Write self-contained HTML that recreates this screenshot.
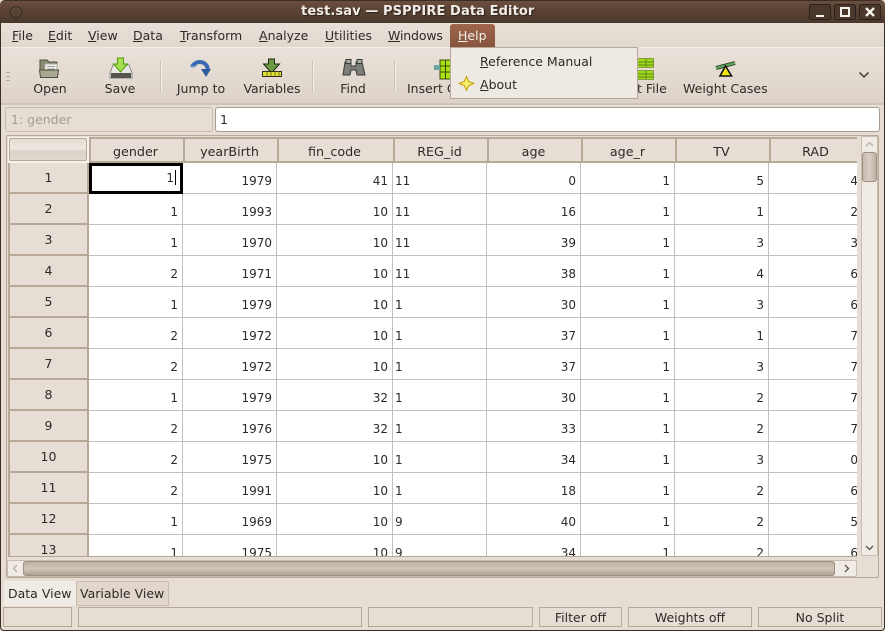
<!DOCTYPE html>
<html><head><meta charset="utf-8">
<style>
html,body{margin:0;padding:0;background:#e6ddd4}
#w{position:relative;width:885px;height:631px;overflow:hidden;background:#e6ddd4;font:12.5px "DejaVu Sans",sans-serif;color:#2e2a26}
.a{position:absolute;white-space:nowrap}
.m{top:28px;line-height:16px}
.t{top:81px;line-height:15px;text-align:center}
.sep{position:absolute;top:60px;width:2px;height:32px;background:linear-gradient(90deg,#cfc4b8 50%,#f2ece6 50%)}
u{text-decoration:underline;text-underline-offset:1px}
table{border-collapse:separate;border-spacing:0;table-layout:fixed;position:absolute;left:0;top:0;width:855px;font:12px "DejaVu Sans",sans-serif;color:#2e2a26}
th{height:26px;padding:4px 3px 0 0;background:#e6ddd4;font:normal 12.7px/18px "DejaVu Sans",sans-serif;border:solid #b8a898;border-width:2px 0 2px 2px;box-sizing:border-box;text-align:center;vertical-align:top}
td{height:31px;padding:6px 4px 0 0;box-sizing:border-box;border-right:1px solid #c0c0c0;border-bottom:1px solid #c0c0c0;text-align:right;background:#fff;line-height:24px;overflow:hidden;vertical-align:top}
td.h{background:#e6ddd4;text-align:center;padding:0;border-left:2px solid #b8a898;border-right:2px solid #b8a898;border-bottom:2px solid #b8a898;line-height:29px;font-size:12.5px}
td.l{text-align:left;padding-left:2px}
.st{position:absolute;top:607px;height:20px;box-sizing:border-box;border:1px solid #b8a898;text-align:center;line-height:20px}
</style></head><body><div id="w">
<!-- title bar -->
<div class="a" style="left:0;top:0;width:885px;height:23px;background:linear-gradient(#6c4f3e 0,#5d4536 35%,#4a382c 100%);border-top:1px solid #3a2d24;box-sizing:border-box;border-radius:5px 5px 0 0"></div>
<div class="a" style="left:10px;top:6px;width:10px;height:10px;border:1px solid #2f241c;border-radius:50%;box-shadow:inset 0 0 0 1px #6f5a4b"></div>
<div class="a" style="left:301px;top:4px;font:bold 13px/16px 'DejaVu Sans',sans-serif;color:#f2ece6;text-shadow:1px 1px 1px #2a1f18;letter-spacing:.1px">test.sav — PSPPIRE Data Editor</div>
<svg class="a" style="left:808px;top:3px" width="74" height="18">
<g fill="#4a382c" stroke="#2b211a"><rect x="1.500" y="1.500" width="21" height="15" rx="2"/><rect x="26.500" y="1.500" width="21" height="15" rx="2"/><rect x="51.500" y="1.500" width="21" height="15" rx="2"/></g>
<g stroke="#f4f0ea" fill="none" stroke-width="2"><path d="M8 13h8"/><rect x="33" y="5" width="8" height="8"/><path d="M58 5l8 8M66 5l-8 8" stroke-width="2.400"/></g></svg>
<!-- menu bar -->
<div class="a" style="left:0;top:23px;width:885px;height:25px;background:linear-gradient(#e8e0d8,#e0d7cd);border-bottom:1px solid #f2ece6;box-sizing:border-box"></div>
<div class="a m" style="left:12px"><u>F</u>ile</div>
<div class="a m" style="left:48px"><u>E</u>dit</div>
<div class="a m" style="left:88px"><u>V</u>iew</div>
<div class="a m" style="left:133px"><u>D</u>ata</div>
<div class="a m" style="left:180px"><u>T</u>ransform</div>
<div class="a m" style="left:259px"><u>A</u>nalyze</div>
<div class="a m" style="left:325px"><u>U</u>tilities</div>
<div class="a m" style="left:388px;letter-spacing:-.15px"><u>W</u>indows</div>
<div class="a" style="left:450px;top:24px;width:45px;height:23px;background:linear-gradient(#a0654b,#875540);border-radius:3px 3px 0 0"></div>
<div class="a m" style="left:458px;color:#f4f0ea"><u>H</u>elp</div>
<!-- toolbar -->
<div class="a" style="left:0;top:48px;width:885px;height:57px;background:linear-gradient(#e9e1d9,#ddd3c9);border-bottom:2px solid #cfc4b8;box-sizing:border-box"></div>
<svg class="a" style="left:6px;top:72px" width="5" height="10"><path d="M0 .5h4M0 4.500h4M0 8.500h4" stroke="#b8a898"/></svg>
<div class="sep" style="left:160px"></div><div class="sep" style="left:312px"></div><div class="sep" style="left:394px"></div>
<!-- open -->
<svg class="a" style="left:38px;top:57px" width="24" height="22"><path d="M2 3h7l2 2h8v8H2z" fill="#8a8a72" stroke="#4e4e40"/><rect x="7" y="7" width="12" height="9" fill="#f4f4f0" stroke="#aaa"/><path d="M9 9.500h8M9 12h8" stroke="#999"/><path d="M1.500 13h19l-1 7.500h-17z" fill="#a8a890" stroke="#4e4e40"/></svg>
<div class="a t" style="left:20px;width:60px">Open</div>
<!-- save -->
<svg class="a" style="left:109px;top:56px" width="24" height="24"><path d="M4 9h16l3 8v5H1v-5z" fill="#e8e8e4" stroke="#8a8a84"/><rect x="2" y="17" width="20" height="5" fill="#55554e"/><path d="M8.500 2h6v6h4l-7 8-7-8h4z" fill="#a5e050" stroke="#4e9a06"/></svg>
<div class="a t" style="left:90px;width:60px">Save</div>
<!-- jump -->
<svg class="a" style="left:190px;top:60px" width="22" height="18"><path d="M2 7C5 0 16 0 18 9" fill="none" stroke="#3a6ab0" stroke-width="4"/><path d="M11 9h10l-5 8z" fill="#2e5c9e"/><path d="M1 7l6-1" stroke="#7ea6dc" stroke-width="1"/></svg>
<div class="a t" style="left:171px;width:60px">Jump to</div>
<!-- variables -->
<svg class="a" style="left:261px;top:58px" width="22" height="20"><path d="M7.500 1h6v5h5l-8 9-8-9h5z" fill="#6c9a44" stroke="#1c2a10"/><rect x="1.500" y="13.500" width="19" height="5" fill="#e2e23c" stroke="#33331a"/><path d="M6 14v4M10 14v4M14 14v4M18 14v4" stroke="#777720"/></svg>
<div class="a t" style="left:236px;width:72px">Variables</div>
<!-- find -->
<svg class="a" style="left:342px;top:58px" width="24" height="20"><path d="M3 4h6v4h5V4h6l3 13h-8l-1-5h-5l-1 5H1z" fill="#7c7e7a" stroke="#3a3a38"/><rect x="4" y="1.500" width="5" height="4" fill="#a8aaa6" stroke="#3a3a38"/><rect x="15" y="1.500" width="5" height="4" fill="#a8aaa6" stroke="#3a3a38"/></svg>
<div class="a t" style="left:323px;width:60px">Find</div>
<!-- insert case -->
<svg class="a" style="left:434px;top:59px" width="18" height="21"><rect x="6" y="1" width="11" height="19" fill="#a8e010" stroke="#3a4a0a"/><path d="M6 7h11M6 13h11M11.500 1v19" stroke="#3a4a0a"/><path d="M0 6h6v5H0z" fill="#6aa5a0"/></svg>
<div class="a t" style="left:407px">Insert C</div>
<!-- split icon -->
<svg class="a" style="left:637px;top:58px" width="18" height="24"><rect x=".5" y=".5" width="16" height="9" fill="#a0d820" stroke="#8aa040"/><rect x=".5" y="12.500" width="16" height="9" fill="#a0d820" stroke="#8aa040"/><path d="M0 4h17M0 7h17M0 16h17M0 19h17M9 0v9M9 12v9" stroke="#5f8a10"/></svg>
<div class="a t" style="left:637px">t File</div>
<!-- weight -->
<svg class="a" style="left:715px;top:60px" width="22" height="18"><path d="M1 8L20 3" stroke="#2a3a20" stroke-width="4"/><path d="M1 8L20 3" stroke="#5faa60" stroke-width="2"/><path d="M10.500 6l6 10H5z" fill="#f2e610" stroke="#111" stroke-width="1.600"/></svg>
<div class="a t" style="left:683px">Weight Cases</div>
<svg class="a" style="left:858px;top:71px" width="12" height="9"><path d="M1.500 1.500L6 6l4.500-4.500" fill="none" stroke="#3f3a34" stroke-width="1.500"/></svg>
<!-- ref entry -->
<div class="a" style="left:5px;top:107px;width:208px;height:25px;box-sizing:border-box;border:1px solid #c8bcb0;border-radius:3px;background:#e6ddd4;color:#a89c90;padding-left:5px;line-height:23px">1: gender</div>
<div class="a" style="left:215px;top:107px;width:665px;height:25px;box-sizing:border-box;border:1px solid #a89c90;border-radius:3px;background:#fff;padding-left:4px;line-height:23px">1</div>
<!-- frame -->
<div class="a" style="left:6px;top:135px;width:873px;height:443px;box-sizing:border-box;border:1px solid #b8a898;border-radius:2px"></div>
<!-- sheet -->
<div class="a" style="left:8px;top:137px;width:849px;height:420px;overflow:hidden;background:#fff;border-bottom:1px solid #b8a898;box-sizing:border-box">
<table>
<colgroup><col style="width:81px"><col style="width:94px"><col style="width:94px"><col style="width:116px"><col style="width:94px"><col style="width:94px"><col style="width:94px"><col style="width:94px"><col style="width:94px"></colgroup>
<tr><th style="background:#f6f2ee;border:0;padding:0;position:relative"><div style="position:absolute;left:1px;top:1px;width:78px;height:23px;box-sizing:border-box;border:1px solid #b8a898;border-radius:2px;background:linear-gradient(#e4dbd2,#eee8e2 45%,#dcd2c8 60%,#e2d9d0)"></div></th><th>gender</th><th>yearBirth</th><th>fin_code</th><th>REG_id</th><th>age</th><th>age_r</th><th>TV</th><th>RAD</th></tr>
<tr><td class="h">1</td><td style="padding:0 4px 0 0;border:3px solid #000;line-height:24px">1<span style="display:inline-block;width:1px;height:15px;background:#000;margin-left:1px;vertical-align:-3px"></span></td><td>1979</td><td>41</td><td class="l">11</td><td>0</td><td>1</td><td>5</td><td>4</td></tr>
<tr><td class="h">2</td><td>1</td><td>1993</td><td>10</td><td class="l">11</td><td>16</td><td>1</td><td>1</td><td>2</td></tr>
<tr><td class="h">3</td><td>1</td><td>1970</td><td>10</td><td class="l">11</td><td>39</td><td>1</td><td>3</td><td>3</td></tr>
<tr><td class="h">4</td><td>2</td><td>1971</td><td>10</td><td class="l">11</td><td>38</td><td>1</td><td>4</td><td>6</td></tr>
<tr><td class="h">5</td><td>1</td><td>1979</td><td>10</td><td class="l">1</td><td>30</td><td>1</td><td>3</td><td>6</td></tr>
<tr><td class="h">6</td><td>2</td><td>1972</td><td>10</td><td class="l">1</td><td>37</td><td>1</td><td>1</td><td>7</td></tr>
<tr><td class="h">7</td><td>2</td><td>1972</td><td>10</td><td class="l">1</td><td>37</td><td>1</td><td>3</td><td>7</td></tr>
<tr><td class="h">8</td><td>1</td><td>1979</td><td>32</td><td class="l">1</td><td>30</td><td>1</td><td>2</td><td>7</td></tr>
<tr><td class="h">9</td><td>2</td><td>1976</td><td>32</td><td class="l">1</td><td>33</td><td>1</td><td>2</td><td>7</td></tr>
<tr><td class="h">10</td><td>2</td><td>1975</td><td>10</td><td class="l">1</td><td>34</td><td>1</td><td>3</td><td>0</td></tr>
<tr><td class="h">11</td><td>2</td><td>1991</td><td>10</td><td class="l">1</td><td>18</td><td>1</td><td>2</td><td>6</td></tr>
<tr><td class="h">12</td><td>1</td><td>1969</td><td>10</td><td class="l">9</td><td>40</td><td>1</td><td>2</td><td>5</td></tr>
<tr><td class="h">13</td><td>1</td><td>1975</td><td>10</td><td class="l">9</td><td>34</td><td>1</td><td>2</td><td>6</td></tr>
</table>
</div>
<!-- v scrollbar -->
<div class="a" style="left:861px;top:136px;width:17px;height:420px;box-sizing:border-box;border:1px solid #c8bcb0;background:#f0ebe5;border-radius:2px"></div>
<svg class="a" style="left:864px;top:140px" width="11" height="8"><path d="M2 6l3.500-3.500L9 6" fill="none" stroke="#bdb2a6" stroke-width="1.300"/></svg>
<svg class="a" style="left:864px;top:544px" width="11" height="8"><path d="M2 2l3.500 3.500L9 2" fill="none" stroke="#5c544c" stroke-width="1.300"/></svg>
<div class="a" style="left:862px;top:152px;width:15px;height:30px;box-sizing:border-box;border:1px solid #9d8f82;border-radius:3px;background:linear-gradient(90deg,#c4b8ac,#d8cec4 50%,#bcaea2)"></div>
<!-- h scrollbar -->
<div class="a" style="left:7px;top:560px;width:850px;height:17px;box-sizing:border-box;border:1px solid #c8bcb0;background:#f0ebe5;border-radius:2px"></div>
<svg class="a" style="left:11px;top:563px" width="8" height="11"><path d="M6 2L2.500 5.500 6 9" fill="none" stroke="#bdb2a6" stroke-width="1.300"/></svg>
<svg class="a" style="left:843px;top:563px" width="8" height="11"><path d="M2 2l3.500 3.500L2 9" fill="none" stroke="#5c544c" stroke-width="1.300"/></svg>
<div class="a" style="left:23px;top:561px;width:812px;height:15px;box-sizing:border-box;border:1px solid #9d8f82;border-radius:3px;background:linear-gradient(#bdb0a4,#d0c5ba 50%,#b0a294)"></div>
<!-- tabs -->
<div class="a" style="left:4px;top:581px;width:72px;height:25px;background:#f0ebe5;border-radius:2px;line-height:26px;padding-left:4px;box-sizing:border-box">Data View</div>
<div class="a" style="left:76px;top:581px;width:93px;height:25px;box-sizing:border-box;border:1px solid #c8bcb0;border-radius:2px;background:#e0d6cc;line-height:24px;padding-left:3px">Variable View</div>
<!-- status -->
<div class="st" style="left:3px;width:69px"></div>
<div class="st" style="left:78px;width:284px"></div>
<div class="st" style="left:368px;width:165px"></div>
<div class="st" style="left:539px;width:83px">Filter off</div>
<div class="st" style="left:628px;width:124px">Weights off</div>
<div class="st" style="left:758px;width:124px">No Split</div>
<!-- window border -->
<div class="a" style="left:0;top:23px;width:885px;height:608px;box-sizing:border-box;border:1px solid #3a2d24;border-top:0;border-radius:0 0 4px 4px;pointer-events:none"></div>
<!-- help menu -->
<div class="a" style="left:450px;top:47px;width:188px;height:52px;box-sizing:border-box;border:1px solid #b8a898;background:#eee9e3"></div>
<div class="a" style="left:480px;top:54px;line-height:16px"><u>R</u>eference Manual</div>
<div class="a" style="left:480px;top:77px;line-height:16px"><u>A</u>bout</div>
<svg class="a" style="left:458px;top:75px" width="18" height="18"><path d="M8.500 1.500l2.200 5 5.300 2-5.300 2-2.200 5-2.200-5-5.300-2 5.300-2z" fill="#f8ee70" stroke="#c4a000" stroke-linejoin="round"/></svg>
</div></body></html>
